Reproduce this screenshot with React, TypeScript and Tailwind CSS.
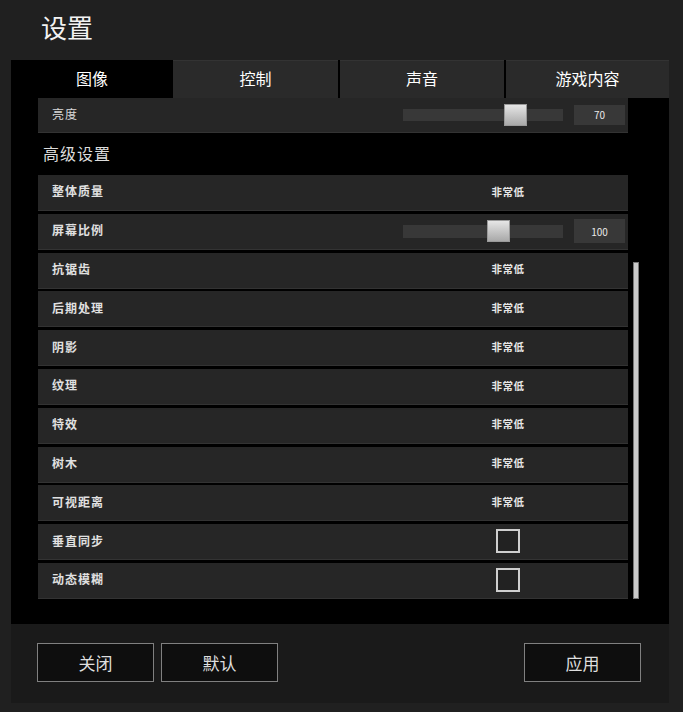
import React from "react";

const FONT = { fontFamily: '"Noto Sans CJK SC", "Noto Sans", sans-serif' };

type Row =
  | { label: string; kind: "value"; value: string }
  | { label: string; kind: "slider"; value: string; thumb: number }
  | { label: string; kind: "check" };

const rows: Row[] = [
  { label: "整体质量", kind: "value", value: "非常低" },
  { label: "屏幕比例", kind: "slider", value: "100", thumb: 84 },
  { label: "抗锯齿", kind: "value", value: "非常低" },
  { label: "后期处理", kind: "value", value: "非常低" },
  { label: "阴影", kind: "value", value: "非常低" },
  { label: "纹理", kind: "value", value: "非常低" },
  { label: "特效", kind: "value", value: "非常低" },
  { label: "树木", kind: "value", value: "非常低" },
  { label: "可视距离", kind: "value", value: "非常低" },
  { label: "垂直同步", kind: "check" },
  { label: "动态模糊", kind: "check" },
];

function Slider({ value, thumb, box }: { value: string; thumb: number; box: number }) {
  return (
    <div className="ml-auto flex items-center pr-[3px]">
      <div className="relative h-[12.5px] w-[160px] bg-[#383838]">
        <div
          className="absolute top-1/2 h-[22px] w-[23px] -translate-y-1/2 border border-[#9a9a9a] bg-gradient-to-b from-[#e6e6e6] to-[#a9a9a9]"
          style={{ left: thumb }}
        />
      </div>
      <div
        className="ml-[11px] flex w-[51px] items-center justify-center bg-[#383838] text-[10px] text-[#e8e8e8]"
        style={{ height: box }}
      >
        {value}
      </div>
    </div>
  );
}

function Tab({ label, active, w }: { label: string; active?: boolean; w: string }) {
  return (
    <div
      className={`${w} flex h-full items-center justify-center pb-[3px] text-[16px] text-white ${
        active ? "bg-black" : "bg-[#2a2a2a] border-t border-[#333]"
      }`}
    >
      {label}
    </div>
  );
}

export default function App() {
  return (
    <div className="h-[712px] w-[683px] overflow-hidden bg-[#202020]" style={FONT}>
      <div className="flex h-[60px] items-center pb-[6px] pl-[41px] text-[26px] leading-none text-[#f2f2f2]">
        设置
      </div>

      <div className="ml-[11px] w-[658px]">
        <div className="h-[564px] bg-black">
          <div className="flex h-[38px]">
            <Tab label="图像" active w="w-[162px]" />
            <Tab label="控制" w="w-[165px]" />
            <div className="w-[2px]" />
            <Tab label="声音" w="w-[164px]" />
            <div className="w-[2px]" />
            <Tab label="游戏内容" w="w-[163px]" />
          </div>

          <div className="flex h-[526px]">
            <div className="ml-[27px] flex w-[590px] flex-col">
              <div className="flex h-[34.7px] items-center border-b border-[#333] bg-[#262626] pl-[14px]">
                <span className="pb-[2px] text-[12px] tracking-[1px] text-[#d8d8d8]">亮度</span>
                <Slider value="70" thumb={101} box={20} />
              </div>
              <div className="flex h-[42.3px] items-center pb-[2px] pl-[5px] text-[16px] tracking-[1px] text-[#dcdcdc]">
                高级设置
              </div>
              <div className="flex flex-col gap-[2.8px]">
                {rows.map((r) => (
                  <div
                    key={r.label}
                    className="flex h-[36px] items-center border-b border-[#333] bg-[#262626] pl-[14px]"
                  >
                    <span className="pb-[2px] text-[12px] font-bold tracking-[1px] text-[#e0e0e0]">{r.label}</span>
                    {r.kind === "value" && (
                      <div className="ml-auto flex w-[240px] justify-center pb-[2px] text-[10.5px] font-bold tracking-[0.5px] text-[#e6e6e6]">
                        {r.value}
                      </div>
                    )}
                    {r.kind === "slider" && <Slider value={r.value} thumb={r.thumb} box={24} />}
                    {r.kind === "check" && (
                      <div className="ml-auto flex w-[240px] justify-center pb-[1px]">
                        <div className="h-[24px] w-[24px] border-2 border-[#cfcfcf] bg-[#222]" />
                      </div>
                    )}
                  </div>
                ))}
              </div>
            </div>
            <div className="ml-[4.5px] w-[6px]">
              <div className="mt-[164px] h-[337px] w-[6px] border border-[#777] bg-[#cacaca]" />
            </div>
          </div>
        </div>

        <div className="flex h-[79px] items-start bg-[#1a1a1a] pl-[26px] pt-[19px]">
          <button className="flex h-[39px] w-[117px] items-center justify-center border border-[#808080] bg-[#0e0e0e] text-[17px] text-[#dedede]">
            关闭
          </button>
          <button className="ml-[7px] flex h-[39px] w-[117px] items-center justify-center border border-[#808080] bg-[#0e0e0e] text-[17px] text-[#dedede]">
            默认
          </button>
          <button className="ml-[246px] flex h-[39px] w-[117px] items-center justify-center border border-[#808080] bg-[#0e0e0e] text-[17px] text-[#dedede]">
            应用
          </button>
        </div>
      </div>
    </div>
  );
}
